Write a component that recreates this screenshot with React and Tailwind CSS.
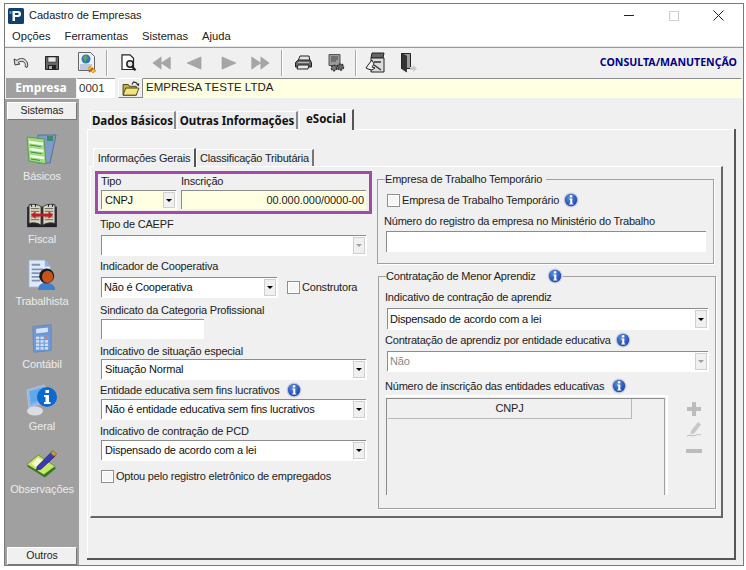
import React from "react";

const F = "font-['Liberation_Sans',Arial,sans-serif]";
const B = "font-['Noto_Sans',sans-serif] font-bold";
const T = "text-[11px] tracking-[-0.2px]";

function Info({ className = "" }) {
  return (
    <svg viewBox="0 0 16 16" className={"w-[16px] h-[16px] shrink-0 " + className}>
      <defs>
        <radialGradient id="ig" cx="0.4" cy="0.3" r="0.8">
          <stop offset="0" stopColor="#5b8fe0" />
          <stop offset="1" stopColor="#1438a8" />
        </radialGradient>
      </defs>
      <circle cx="8" cy="8" r="7.5" fill="#c8cfdb" />
      <circle cx="8" cy="8" r="6.2" fill="url(#ig)" />
      <rect x="6.9" y="3.2" width="2.4" height="2.2" fill="#fff" />
      <path d="M6.3 6.4h3v5h1v1.2H6.2v-1.2h1v-3.8h-.9z" fill="#fff" />
    </svg>
  );
}

function Arrow({ disabled }) {
  return (
    <div className="w-[12px] shrink-0 my-[1px] mr-[1px] bg-[#f0f0f0] border border-[#d0d0d0] flex items-center justify-center">
      <div className={"w-0 h-0 border-l-[3px] border-r-[3px] border-t-[3px] border-l-transparent border-r-transparent " + (disabled ? "border-t-[#a0a0a0]" : "border-t-black")} />
    </div>
  );
}

function Select({ value, w = "w-[265px]", h = "h-[20px]", bg = "bg-white", disabled, pl = "pl-[4px]", className = "" }) {
  return (
    <div className={`flex ${w} ${h} ${bg} border-t border-l border-[#8c8c8c] shadow-[1px_1px_0_#ffffff] ${className}`}>
      <div className={`flex-1 flex items-center ${pl} ${T} whitespace-nowrap ${disabled ? "text-[#8a8a8a]" : "text-[#111]"}`}>{value}</div>
      <Arrow disabled={disabled} />
    </div>
  );
}

function Label({ children, className = "" }) {
  return <div className={`${T} leading-[14px] h-[14px] whitespace-nowrap text-[#222] -ml-[1px] ` + className}>{children}</div>;
}

function Check({ className = "" }) {
  return <div className={"w-[13px] h-[13px] shrink-0 bg-[#f6f6f6] border border-[#8f8f8f] shadow-[inset_0_0_0_1px_#fff] " + className} />;
}

function Input({ className = "" }) {
  return <div className={"bg-white border-t border-l border-[#8c8c8c] " + className} />;
}

/* toolbar icons */
const Undo = () => (
  <svg viewBox="0 0 16 13" className="w-[16px] h-[13px]">
    <path d="M1 3l1 6 5-1-2-1.500c2-1.500 5-1.500 6.500 0 1 1.200 1 2.500.5 4l2 1c1.200-2 1-5-1-7C10.500 1.500 6.500 2 4 4.300z" fill="#d8d8d8" stroke="#444" strokeWidth="1" />
  </svg>
);
const Save = () => (
  <svg viewBox="0 0 14 14" className="w-[14px] h-[14px]">
    <path d="M.5.500h13v13H.5z" fill="#666" stroke="#222" />
    <rect x="3" y="1" width="8" height="5" fill="#e8e8e8" stroke="#333" strokeWidth=".6" />
    <rect x="3" y="9" width="8" height="4.500" fill="#222" /><rect x="4" y="10" width="3" height="3" fill="#aaa" />
  </svg>
);
const WebDoc = () => (
  <svg viewBox="0 0 20 21" className="w-[20px] h-[21px]">
    <path d="M1.500 .5h12l4 4v14h-16z" fill="#eef2f6" stroke="#666" />
    <circle cx="9" cy="7" r="4.500" fill="#2f78b4" /><path d="M6 5l3-2 2 3-2 2-1 3z" fill="#57a860" />
    <path d="M3 13h12M3 15h11M3 17h8" stroke="#8ea0c0" />
    <path d="M13 14l6 5-3 2-5-4z" fill="#f0c020" stroke="#a87810" strokeWidth=".5" /><path d="M12 20l4-4" stroke="#d04010" strokeWidth="1.500" />
  </svg>
);
const Preview = () => (
  <svg viewBox="0 0 16 17" className="w-[16px] h-[17px]">
    <path d="M1 .8h8l3.500 3.500V15.500H1z" fill="#fff" stroke="#222" strokeWidth="1.200" />
    <circle cx="9" cy="10" r="3.200" fill="#dfe6ec" stroke="#222" strokeWidth="1.500" /><path d="M11 12.500l3.500 3.800" stroke="#222" strokeWidth="2.200" />
  </svg>
);
const Nav = ({ d, w = 22, h = 14, vw = 24 }) => (
  <svg viewBox={`0 0 ${vw} 16`} style={{ width: w, height: h }} preserveAspectRatio="none"><path d={d} fill="#a6a6a6" stroke="#9a9a9a" strokeWidth=".6" /></svg>
);
const Printer = () => (
  <svg viewBox="0 0 18 15" className="w-[18px] h-[15px]">
    <path d="M6 1h9l1 5H4z" fill="#e6e6e6" stroke="#222" /><path d="M1.500 7.500L4 5h12l1.500 2.500V12h-16z" fill="#666" stroke="#222" /><path d="M4 10h11l-1 4H3z" fill="#e8e8e8" stroke="#222" /><path d="M4 7.500h11" stroke="#bbb" />
  </svg>
);
const Gears = () => (
  <svg viewBox="0 0 17 18" className="w-[17px] h-[18px]">
    <path d="M1 .5h11v11H1z" fill="#9a9a9a" stroke="#555" /><path d="M3 3h7M3 5h7M3 7h5" stroke="#444" />
    <circle cx="12.500" cy="13" r="3" fill="#666" stroke="#333" strokeDasharray="2 1" strokeWidth="1.500" /><circle cx="6" cy="14" r="2.700" fill="#777" stroke="#333" strokeDasharray="2 1" strokeWidth="1.400" />
  </svg>
);
const Tools = () => (
  <svg viewBox="0 0 20 21" className="w-[20px] h-[21px]">
    <path d="M7 1h12l-1 5H6z" fill="#666" stroke="#222" /><path d="M6 6h13v14H6z" fill="#dcdcdc" stroke="#222" /><path d="M9 10h7M9 13l7 5" stroke="#333" strokeWidth="1.400" />
    <path d="M7 8l-4 5-2 3 2 1 4 1 3-2-3-1 2-3z" fill="#f2f2f2" stroke="#222" />
  </svg>
);
const ExitDoor = () => (
  <svg viewBox="0 0 18 20" className="w-[18px] h-[20px]">
    <path d="M1.500 .5h9v15h-9z" fill="#9a9a9a" stroke="#222" /><path d="M1.500 .5l5 2.500v16l-5-3.500z" fill="#333" stroke="#222" strokeWidth=".7" /><path d="M10 14h3v-2l4 3.500-4 3.500v-2h-3z" fill="#c9c9c9" />
  </svg>
);
const Folder = () => (
  <svg viewBox="0 0 20 17" className="w-[18px] h-[15px] shrink-0">
    <path d="M1 4h6l1 2h8v10H1z" fill="#c9b23c" stroke="#3a3a20" /><path d="M4 8h15l-3 8H1z" fill="#f4e27c" stroke="#3a3a20" />
    <path d="M11 4l2-3 3 1 2 2.500" fill="none" stroke="#222" strokeWidth="1.200" /><path d="M19 6l.3-3.500-3.300 1.500z" fill="#222" />
  </svg>
);

/* sidebar icons */
const Basicos = () => (
  <svg viewBox="0 0 32 32" className="w-[32px] h-[32px]">
    <path d="M12 1h18l-6 28H12z" fill="#7f9cc8" stroke="#56709a" /><rect x="21" y="2" width="6" height="5" fill="#3d8a70" />
    <path d="M1 3l17 2 2 25-17-3z" fill="#9fdc7a" stroke="#5a9a58" />
    <path d="M3 8l14 2M3.500 15l14 2M4 22l14 2" stroke="#f2fff0" strokeWidth="2.600" /><path d="M4 11l11 1.600M4.500 18l11 1.600M5 25l9 1.400" stroke="#3f8f4a" strokeWidth="1" />
  </svg>
);
const Fiscal = () => (
  <svg viewBox="0 0 34 28" className="w-[32px] h-[26px]">
    <path d="M1 4h32v22H1z" fill="#23202a" /><path d="M3 2c4-1 9-1 13 2v20c-4-3-9-3-13-2zM31 2c-4-1-9-1-13 2v20c4-3 9-3 13-2z" fill="#d8d4c2" stroke="#333" />
    <path d="M5 6h9M5 9h9M5 12h9M5 15h9M5 18h9M20 6h9M20 9h9M20 12h9M20 15h9M20 18h9" stroke="#665" />
    <path d="M5 13l5-4v2.500h14V9l5 4-5 4v-2.500H10V17z" fill="#c21c24" />
    <path d="M5 1l1 3M10 1v3M24 1v3M29 1l-1 3" stroke="#222" strokeWidth="1.200" />
  </svg>
);
const Trabalhista = () => (
  <svg viewBox="0 0 32 34" className="w-[30px] h-[32px]">
    <path d="M2 1h17l6 7v22H2z" fill="#dfe9f8" stroke="#9ab" /><path d="M19 1l6 7h-6z" fill="#8eb0e6" />
    <path d="M5 6h9M5 11h12M5 15h9M5 19h9M5 23h9" stroke="#7e93b3" strokeWidth="2" />
    <path d="M12 33c0-6 4-8 8-8s10 2 10 8z" fill="#3f7fd0" />
    <circle cx="21" cy="18" r="8" fill="#1c1c1c" /><ellipse cx="22" cy="19" rx="6" ry="6.500" fill="#c4541c" />
  </svg>
);
const Contabil = () => (
  <svg viewBox="0 0 24 32" className="w-[22px] h-[31px]">
    <path d="M2 3l20-2v28l-19 2z" fill="#6f9ae0" stroke="#6a84a8" /><path d="M5 5l14-1.500v6L5 11z" fill="#d0e4fa" stroke="#50709a" strokeWidth=".6" />
    {[0, 1, 2, 3].map((r) => [0, 1, 2].map((c) => (
      <rect key={r + "-" + c} x={5.5 + c * 4.8} y={14 + r * 3.8} width="3.500" height="2.700" fill={r === 0 && c === 2 ? "#e08050" : "#cfe0f6"} />
    )))}
  </svg>
);
const Geral = () => (
  <svg viewBox="0 0 32 32" className="w-[32px] h-[32px]">
    <path d="M1 6l17-5 2 3v14L3 24z" fill="#8fb6e6" stroke="#b5c2d4" /><path d="M3.500 7.500L16 4v11L5 20z" fill="#5fa8ec" />
    <ellipse cx="9" cy="27" rx="8" ry="4.500" fill="#dcdde2" />
    <circle cx="21" cy="13" r="10" fill="#0a6ad0" /><rect x="19.500" y="6" width="3.500" height="3" fill="#fff" /><path d="M18 11h5v7h1.500v2H18v-2h1.500v-5H18z" fill="#fff" />
  </svg>
);
const Obs = () => (
  <svg viewBox="0 0 34 32" className="w-[32px] h-[31px]">
    <path d="M1 19L13 10l19 11-12 10z" fill="#2f7a20" /><path d="M1 17L13 7l18 12-12 9z" fill="#c9e86a" stroke="#3b6a1e" strokeWidth=".6" /><path d="M6 16l7-6 6 4-7 7z" fill="#f3f9d0" />
    <path d="M12 19L27 4l4 4-15 14-5 1z" fill="#3a3ab8" stroke="#181850" strokeWidth=".7" /><path d="M26 5l2.500-3 4 4-2.500 2.500z" fill="#c79a3a" stroke="#5a4010" strokeWidth=".5" />
  </svg>
);

function ToolSlot({ w, children }) {
  return <div className="flex items-center justify-center shrink-0" style={{ width: w }}>{children}</div>;
}
const Sep = () => <div className="w-[1px] h-[26px] bg-[#a8a8a8] border-r border-white shrink-0 box-content" />;

function SideItem({ icon, label, mt }) {
  return (
    <div className={"flex flex-col items-center h-[62.500px] " + mt}>
      <div className="h-[33px] flex items-end justify-center">{icon}</div>
      <div className="text-[11px] tracking-[-0.1px] leading-[14px] mt-[3px] text-[#ececec] whitespace-nowrap">{label}</div>
    </div>
  );
}

function OuterTab({ children, w, active }) {
  return (
    <div className={`${w} ${active ? "h-[21px] border-t border-l border-white border-r-2 border-r-[#555] bg-[#f0f0f0] z-10 -mb-[1px] pb-[3px]" : "h-[18px] border-t border-l border-white border-r-2 border-r-[#8a8a8a] bg-[#ededed]"} flex items-center justify-center text-[11.500px] ${B} text-[#111] whitespace-nowrap`}>
      {children}
    </div>
  );
}

export default function App() {
  return (
    <div className={`w-[746px] h-[570px] bg-white overflow-hidden pt-[3px] pl-[4px] ${F} text-black`}>
      <div className="w-[740px] h-[563px] border border-[#7a7a7a] bg-white flex flex-col">
        {/* title bar */}
        <div className="h-[23px] shrink-0 flex items-center pl-[3px]">
          <svg viewBox="0 0 16 16" className="w-[16px] h-[16px] shrink-0">
            <rect width="16" height="16" rx="1.500" fill="#12406e" />
            <path d="M4.500 3H10c2 0 3 1.200 3 3s-1 3-3 3H7v4H4.500z" fill="#fff" />
            <rect x="7" y="5" width="3.500" height="2" fill="#12406e" />
            <rect x="1.500" y="3" width="2" height="3" fill="#35a0d8" />
          </svg>
          <div className="ml-[5px] text-[11px] text-[#222]">Cadastro de Empresas</div>
          <div className="ml-auto flex items-center">
            <div className="w-[10px] h-[1px] bg-[#222]" />
            <div className="w-[10px] h-[10px] border border-[#cfcfcf] ml-[35px]" />
            <svg viewBox="0 0 11 11" className="w-[11px] h-[11px] ml-[34px] mr-[19px]"><path d="M.5.500l10 10M10.500.500l-10 10" stroke="#222" /></svg>
          </div>
        </div>
        {/* menu */}
        <div className="h-[20px] shrink-0 flex items-center pl-[7px] gap-[14px] text-[11.200px] text-[#222] border-b border-[#e8e8e8]">
          <span>Opções</span><span>Ferramentas</span><span>Sistemas</span><span>Ajuda</span>
        </div>
        {/* toolbar */}
        <div className="h-[30px] shrink-0 flex items-center bg-[#f0f0f0] border-t border-[#9a9a9a] pl-[1px]">
          <ToolSlot w={30}><Undo /></ToolSlot>
          <ToolSlot w={32}><Save /></ToolSlot>
          <ToolSlot w={38}><WebDoc /></ToolSlot>
          <ToolSlot w={2}><Sep /></ToolSlot>
          <ToolSlot w={42}><Preview /></ToolSlot>
          <ToolSlot w={24}><Nav w={20} h={14} d="M1 8l10-7v7l11-7v14L11 8v7z" /></ToolSlot>
          <ToolSlot w={40}><Nav w={16} h={14} vw={16} d="M1 8l14-7v14z" /></ToolSlot>
          <ToolSlot w={30}><Nav w={16} h={14} vw={16} d="M15 8L1 1v14z" /></ToolSlot>
          <ToolSlot w={32}><Nav w={20} h={14} d="M23 8L13 1v7L2 1v14l11-7v7z" /></ToolSlot>
          <ToolSlot w={5}><div /></ToolSlot>
          <ToolSlot w={2}><Sep /></ToolSlot>
          <ToolSlot w={40}><Printer /></ToolSlot>
          <ToolSlot w={26}><Gears /></ToolSlot>
          <ToolSlot w={6}><div /></ToolSlot>
          <ToolSlot w={2}><Sep /></ToolSlot>
          <ToolSlot w={36}><Tools /></ToolSlot>
          <ToolSlot w={32}><ExitDoor /></ToolSlot>
          <div className={`ml-auto mr-[6px] text-[10.600px] ${B} text-[#00008a] whitespace-nowrap`}>CONSULTA/MANUTENÇÃO</div>
        </div>
        {/* empresa row */}
        <div className="h-[22px] shrink-0 flex items-stretch bg-[#f0f0f0] pl-[1px] pr-[1px] py-[1px]">
          <div className={`w-[70px] bg-[#a0a0a0] text-white ${B} text-[12px] flex items-center justify-center`}>Empresa</div>
          <div className="w-[38px] ml-[1px] bg-white text-[11.500px] text-[#333] flex items-center pl-[2px] border-t border-[#9a9a9a]">0001</div>
          <div className="w-[25px] ml-[3px] bg-[#efefef] border border-t-white border-l-white border-r-[#888] border-b-[#888] flex items-center justify-center overflow-hidden"><Folder /></div>
          <div className="flex-1 bg-[#ffffe1] border-t border-[#8c8c8c] border-r border-r-white text-[11.500px] text-[#222] flex items-center pl-[3px] pb-[2px]">EMPRESA TESTE LTDA</div>
        </div>
        {/* body */}
        <div className="flex-1 flex bg-[#f0f0f0] min-h-0">
          {/* sidebar */}
          <div className="w-[74px] shrink-0 bg-[#a0a0a0] flex flex-col px-[2px] pt-[3px]">
            <div className="h-[18px] shrink-0 bg-[#f0f0f0] border border-white border-r-[#777] border-b-[#777] text-[10.500px] text-[#222] flex items-center justify-center">Sistemas</div>
            <SideItem icon={<Basicos />} label="Básicos" mt="mt-[13px]" />
            <SideItem icon={<Fiscal />} label="Fiscal" />
            <SideItem icon={<Trabalhista />} label="Trabalhista" />
            <SideItem icon={<Contabil />} label="Contábil" />
            <SideItem icon={<Geral />} label="Geral" />
            <SideItem icon={<Obs />} label="Observações" />
            <div className="mt-auto h-[18px] shrink-0 bg-[#f0f0f0] border border-white border-r-[#777] border-b-[#777] text-[10.500px] text-[#222] flex items-center justify-center">Outros</div>
          </div>
          {/* main */}
          <div className="flex-1 pl-[8px] pt-[11px] min-w-0">
            <div className="w-[649px] flex flex-col">
              <div className="flex items-end h-[19px] pl-[3px] gap-[1px] shrink-0 relative z-10">
                <OuterTab w="w-[86px]">Dados Básicos</OuterTab>
                <OuterTab w="w-[121px]">Outras Informações</OuterTab>
                <OuterTab w="w-[55px]" active>eSocial</OuterTab>
              </div>
              {/* outer panel: the dark right and bottom edges are the wrapper's background */}
              <div className="h-[431px] shrink-0 bg-[#555] pr-[2px] pb-[2px] flex">
                <div className="flex-1 min-w-0 bg-[#f0f0f0] border-t border-l border-white pl-[2px] pt-[17px] pr-[11px] pb-[40px] flex flex-col">
                  {/* inner tabs */}
                  <div className="flex items-end h-[19px] shrink-0 pl-[3px]">
                    <div className="w-[103px] h-[19px] border-t border-l border-white border-r-2 border-r-[#555] bg-[#f0f0f0] -mb-[1px] z-10 flex items-center justify-center text-[11px] tracking-[-0.2px] text-[#222] whitespace-nowrap">Informações Gerais</div>
                    <div className="w-[118px] h-[17px] border-t border-l border-white border-r-2 border-r-[#777] bg-[#ededed] flex items-center justify-center text-[11px] tracking-[-0.2px] text-[#222] whitespace-nowrap">Classificação Tributária</div>
                  </div>
                  {/* inner panel */}
                  <div className="flex-1 min-h-0 border border-white border-r-2 border-r-[#666] border-b-2 border-b-[#666] flex pl-[4px] pt-[4px]">
                    {/* left col */}
                    <div className="w-[282px] shrink-0 flex flex-col">
                      <div className="w-[277px] h-[43px] border-[3px] border-[#a04ca4] pl-[3px] shrink-0">
                        <div className="flex">
                          <Label className="w-[80px] ml-0">Tipo</Label>
                          <Label className="ml-0">Inscrição</Label>
                        </div>
                        <div className="flex mt-[2px]">
                          <Select value="CNPJ" w="w-[75px]" h="h-[19px]" bg="bg-[#ffffe1]" pl="pl-[3px]" />
                          <div className="w-[185px] ml-[5px] h-[19px] bg-[#ffffe1] border-t border-l border-[#8c8c8c] text-[11px] tracking-[-0.05px] text-[#222] flex items-center justify-end pr-[2px]">00.000.000/0000-00</div>
                        </div>
                      </div>
                      <div className="pl-[6px] flex flex-col">
                        <Label className="mt-[3px]">Tipo de CAEPF</Label>
                        <Select value="" disabled h="h-[20px]" className="mt-[4px]" />
                        <Label className="mt-[4px]">Indicador de Cooperativa</Label>
                        <div className="flex items-center mt-[4px]">
                          <Select value="Não é Cooperativa" w="w-[176px]" pl="pl-[2px]" />
                          <Check className="ml-[10px]" />
                          <span className={`ml-[2px] ${T} text-[#222]`}>Construtora</span>
                        </div>
                        <Label className="mt-[6px]">Sindicato da Categoria Profissional</Label>
                        <Input className="w-[103px] h-[20px] mt-[2px]" />
                        <Label className="mt-[5px]">Indicativo de situação especial</Label>
                        <Select value="Situação Normal" className="mt-[1px]" pl="pl-[3px]" />
                        <div className="flex items-center h-[16px] mt-[3px]">
                          <Label>Entidade educativa sem fins lucrativos</Label>
                          <Info className="ml-[6px]" />
                        </div>
                        <Select value="Não é entidade educativa sem fins lucrativos" className="mt-[1px]" pl="pl-[3px]" />
                        <Label className="mt-[5px]">Indicativo de contração de PCD</Label>
                        <Select value="Dispensado de acordo com a lei" className="mt-[2px]" pl="pl-[3px]" />
                        <div className="flex items-center mt-[10px]">
                          <Check />
                          <span className={`ml-[2px] ${T} leading-[13px] text-[#222]`}>Optou pelo registro eletrônico de empregados</span>
                        </div>
                      </div>
                    </div>
                    {/* right col */}
                    <div className="w-[338px] shrink-0 flex flex-col pt-[8px]">
                      {/* group 1 */}
                      <fieldset className="w-[336px] h-[92px] border border-[#a0a0a0] shadow-[1px_1px_0_#fff] px-[7px] -mt-[7px]">
                        <legend className={`${T} leading-[14px] text-[#222] pr-[4px]`}>Empresa de Trabalho Temporário</legend>
                        <div className="flex items-center h-[16px] mt-[6px] pl-[2px]">
                          <Check />
                          <span className={`ml-[2px] ${T} text-[#222]`}>Empresa de Trabalho Temporário</span>
                          <Info className="ml-[4px]" />
                        </div>
                        <Label className="mt-[6px]">Número do registro da empresa no Ministério do Trabalho</Label>
                        <Input className="w-[320px] h-[21px] mt-[3px] ml-[1px]" />
                      </fieldset>
                      {/* group 2 */}
                      <fieldset className="w-[337px] h-[241px] border border-[#a0a0a0] shadow-[1px_1px_0_#fff] px-[7px] ml-[1px] mt-[4px]">
                        <legend className={`flex items-center ${T} h-[16px] text-[#222]`}>
                          <span className="whitespace-nowrap">Contratação de Menor Aprendiz</span>
                          <span className="w-[11px]" />
                          <Info />
                        </legend>
                        <Label className="mt-[6px]">Indicativo de contração de aprendiz</Label>
                        <Select value="Dispensado de acordo com a lei" w="w-[321px]" h="h-[21px]" className="mt-[4px] ml-[1px]" pl="pl-[2px]" />
                        <div className="flex items-center h-[16px] mt-[3px]">
                          <Label>Contratação de aprendiz por entidade educativa</Label>
                          <Info className="ml-[4px]" />
                        </div>
                        <Select value="Não" disabled w="w-[321px]" h="h-[20px]" className="mt-[3px] ml-[1px]" pl="pl-[2px]" />
                        <div className="flex items-center h-[16px] mt-[7px]">
                          <Label>Número de inscrição das entidades educativas</Label>
                          <Info className="ml-[7px]" />
                        </div>
                        <div className="flex mt-[1px]">
                          <div className="w-[283px] h-[100px] bg-[#f0f0f0] border-t-[2px] border-r-[2px] border-t-white border-r-white -ml-[1px]">
                            <div className="w-[279px] h-[97px] ml-[1px] mt-[1px] border-t border-l border-r border-[#8c8c8c] border-r-[#a0a0a0] pl-[1px]">
                              <div className={`w-[244px] h-[20px] border-r border-b border-[#b8b8b8] ${T} text-[#222] flex items-center justify-center`}>CNPJ</div>
                            </div>
                          </div>
                          <div className="ml-[18px] flex flex-col items-center pt-[6px] w-[16px]">
                            <svg viewBox="0 0 16 16" className="w-[16px] h-[16px]"><path d="M6 1h4v5h5v4h-5v5H6v-5H1V6h5z" fill="#bcbcbc" /></svg>
                            <svg viewBox="0 0 16 16" className="w-[16px] h-[16px] mt-[4px]"><path d="M5 10l7-9 3 2.500-7 9-3.500 1z" fill="#c8c8c8" /><path d="M1 15c3-2 5 1 8-.5s4-1 6-.5" fill="none" stroke="#bcbcbc" /></svg>
                            <svg viewBox="0 0 16 6" className="w-[16px] h-[6px] mt-[11px]"><rect y="1" width="16" height="4" fill="#bcbcbc" /></svg>
                          </div>
                        </div>
                      </fieldset>
                    </div>
                  </div>
                </div>
              </div>
            </div>
          </div>
        </div>
      </div>
    </div>
  );
}
